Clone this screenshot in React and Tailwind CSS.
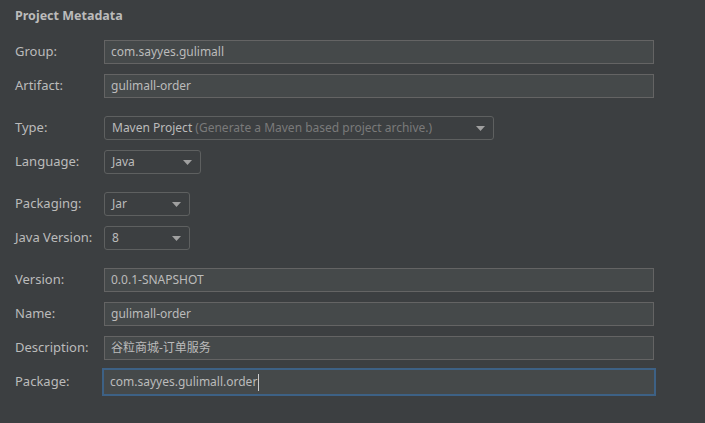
import React from "react";

const font = { fontFamily: '"Noto Sans", "Noto Sans CJK SC", sans-serif' };

function Label({ children }) {
  return <div className="w-[89px] shrink-0 text-[13px] text-[#bbbbbb]">{children}</div>;
}

function TextField({ value, focused }) {
  if (focused) {
    return (
      <div className="-mx-[2px] flex h-[28px] w-[554px] items-center border-2 border-[#3d6185] bg-[#45494a] pl-[6px] text-[12px] text-[#bbbbbb]">
        <span>{value}</span>
        <span className="ml-px h-[17px] w-px bg-[#cccccc]" />
      </div>
    );
  }
  return (
    <div className="flex h-6 w-[550px] items-center border border-[#646464] bg-[#45494a] pl-[6px] text-[12px] text-[#bbbbbb]">
      {value}
    </div>
  );
}

function Select({ width, value, hint }) {
  return (
    <div
      className={`flex h-6 items-center justify-between rounded-[3px] border border-[#5e6060] bg-[#3c3f41] pl-[7px] pr-[8px] text-[12px] text-[#bbbbbb] ${width}`}
    >
      <span>
        {value}
        {hint && <span className="text-[#7a7a7a]"> {hint}</span>}
      </span>
      <svg width="9" height="5" viewBox="0 0 9 5">
        <path d="M0 0 L9 0 L4.5 5 Z" fill="#a0a0a0" />
      </svg>
    </div>
  );
}

function Row({ label, children, className = "" }) {
  return (
    <div className={`flex h-6 items-center ${className}`}>
      <Label>{label}</Label>
      {children}
    </div>
  );
}

export default function App() {
  return (
    <div className="h-[423px] w-[705px] bg-[#3c3f41] px-[15px] pt-[6px]" style={font}>
      <div className="text-[12.5px] font-bold leading-[20px] text-[#bbbbbb]">Project Metadata</div>
      <Row label="Group:" className="mt-[14px]">
        <TextField value="com.sayyes.gulimall" />
      </Row>
      <Row label="Artifact:" className="mt-[10px]">
        <TextField value="gulimall-order" />
      </Row>
      <Row label="Type:" className="mt-[18px]">
        <Select width="w-[390px]" value="Maven Project" hint="(Generate a Maven based project archive.)" />
      </Row>
      <Row label="Language:" className="mt-[10px]">
        <Select width="w-[97px]" value="Java" />
      </Row>
      <Row label="Packaging:" className="mt-[18px]">
        <Select width="w-[86px]" value="Jar" />
      </Row>
      <Row label="Java Version:" className="mt-[10px]">
        <Select width="w-[86px]" value="8" />
      </Row>
      <Row label="Version:" className="mt-[18px]">
        <TextField value="0.0.1-SNAPSHOT" />
      </Row>
      <Row label="Name:" className="mt-[10px]">
        <TextField value="gulimall-order" />
      </Row>
      <Row label="Description:" className="mt-[10px]">
        <TextField value="谷粒商城-订单服务" />
      </Row>
      <Row label="Package:" className="mt-[10px]">
        <TextField value="com.sayyes.gulimall.order" focused />
      </Row>
    </div>
  );
}
